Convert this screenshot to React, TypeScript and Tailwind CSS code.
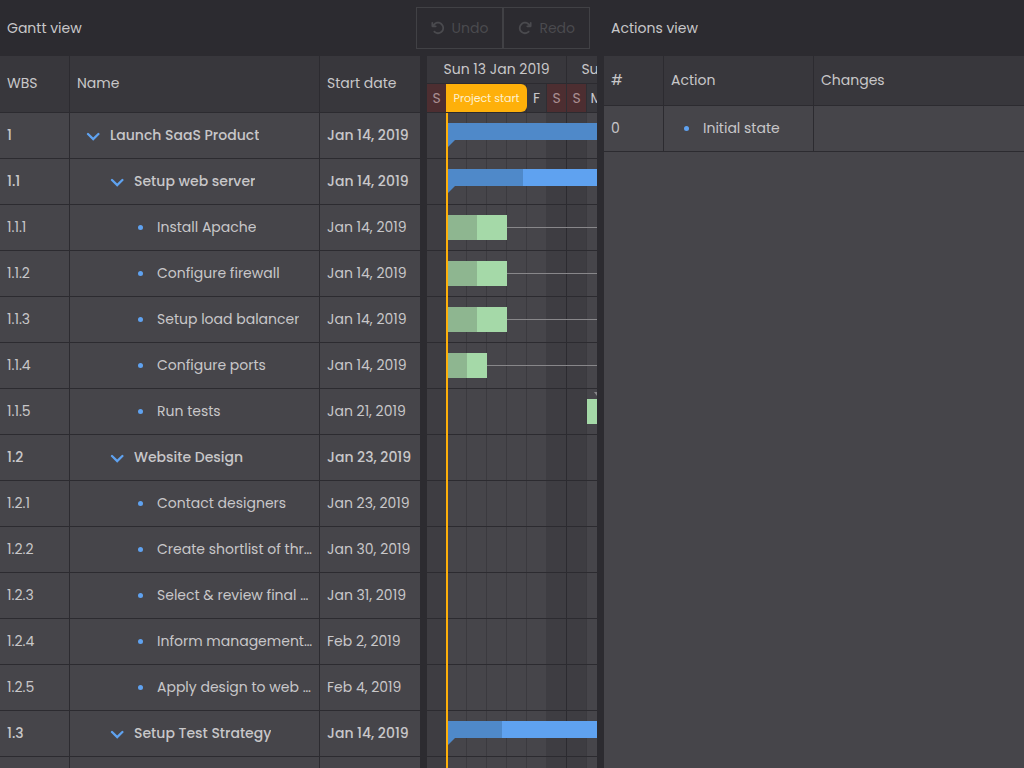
import type { ReactNode } from "react";
import { FaArrowRotateLeft, FaArrowRotateRight } from "react-icons/fa6";

type Bar = { kind: "parent" | "leaf"; start: number; done: number; width: number; link?: boolean };
type Task = { wbs: string; name: string; date: string; level: number; parent?: boolean; bar?: Bar };

const tasks: Task[] = [
  { wbs: "1", name: "Launch SaaS Product", date: "Jan 14, 2019", level: 0, parent: true, bar: { kind: "parent", start: 20, done: 200, width: 900 } },
  { wbs: "1.1", name: "Setup web server", date: "Jan 14, 2019", level: 1, parent: true, bar: { kind: "parent", start: 20, done: 76, width: 200 } },
  { wbs: "1.1.1", name: "Install Apache", date: "Jan 14, 2019", level: 2, bar: { kind: "leaf", start: 20, done: 30, width: 60, link: true } },
  { wbs: "1.1.2", name: "Configure firewall", date: "Jan 14, 2019", level: 2, bar: { kind: "leaf", start: 20, done: 30, width: 60, link: true } },
  { wbs: "1.1.3", name: "Setup load balancer", date: "Jan 14, 2019", level: 2, bar: { kind: "leaf", start: 20, done: 30, width: 60, link: true } },
  { wbs: "1.1.4", name: "Configure ports", date: "Jan 14, 2019", level: 2, bar: { kind: "leaf", start: 20, done: 20, width: 40, link: true } },
  { wbs: "1.1.5", name: "Run tests", date: "Jan 21, 2019", level: 2, bar: { kind: "leaf", start: 160, done: 0, width: 40 } },
  { wbs: "1.2", name: "Website Design", date: "Jan 23, 2019", level: 1, parent: true },
  { wbs: "1.2.1", name: "Contact designers", date: "Jan 23, 2019", level: 2 },
  { wbs: "1.2.2", name: "Create shortlist of thr…", date: "Jan 30, 2019", level: 2 },
  { wbs: "1.2.3", name: "Select & review final …", date: "Jan 31, 2019", level: 2 },
  { wbs: "1.2.4", name: "Inform management…", date: "Feb 2, 2019", level: 2 },
  { wbs: "1.2.5", name: "Apply design to web …", date: "Feb 4, 2019", level: 2 },
  { wbs: "1.3", name: "Setup Test Strategy", date: "Jan 14, 2019", level: 1, parent: true, bar: { kind: "parent", start: 20, done: 55, width: 200 } },
  { wbs: "", name: "", date: "", level: 2 },
];

// The project start marker covers Monday to Thursday of the first week.
const days = ["S", "", "", "", "", "F", "S", "S", "M"];
const weeks = ["Sun 13 Jan 2019", "Sun 20 Jan 2019"];
const indents = ["pl-4", "pl-10", "pl-16"];
const isWeekend = (i: number) => i % 7 === 0 || i % 7 === 6;

function ToolButton({ children }: { children: ReactNode }) {
  return (
    <button
      type="button"
      disabled
      className="flex h-[42px] items-center gap-[7px] border border-[#414145] px-[14px] pb-px text-[#4a4a4e]"
    >
      {children}
    </button>
  );
}

function Bullet() {
  return (
    <span className="flex w-[13px] shrink-0 justify-center">
      <span className="mt-0.5 size-[5px] rounded-full bg-[#5fa2f0]" />
    </span>
  );
}

function Chevron() {
  return (
    <svg width="14" height="14" viewBox="0 0 14 14" fill="none" stroke="currentColor" strokeWidth="2.3">
      <path d="M2 5L7.2 10.1L12.4 5" strokeLinecap="round" strokeLinejoin="miter" />
    </svg>
  );
}

function HeaderCell({ children, last }: { children: ReactNode; last?: boolean }) {
  return (
    <th
      className={
        "border-b border-[#2c2b30] bg-[#38373c] px-[7px] pb-0.5 text-left font-normal " + (last ? "" : "border-r")
      }
    >
      {children}
    </th>
  );
}

function TaskTable() {
  return (
    <table className="w-[420px] shrink-0 table-fixed border-separate border-spacing-0 self-start">
      <colgroup>
        <col className="w-[70px]" />
        <col className="w-[250px]" />
        <col className="w-[100px]" />
      </colgroup>
      <thead>
        <tr className="h-[57px]">
          <HeaderCell>WBS</HeaderCell>
          <HeaderCell>Name</HeaderCell>
          <HeaderCell last>Start date</HeaderCell>
        </tr>
      </thead>
      <tbody>
        {tasks.map((t, i) => (
          <tr key={i} className={"h-[46px] " + (t.parent ? "font-medium" : "")}>
            <td className="border-r border-b border-[#2c2b30] px-[7px] pb-0.5">{t.wbs}</td>
            <td className="border-r border-b border-[#2c2b30] pr-1 pb-0.5">
              {t.name && (
                <div className={"flex items-center gap-[10px] " + indents[t.level]}>
                  {t.parent ? (
                    <button type="button" aria-label={"Collapse " + t.name} className="mt-0.5 shrink-0 text-[#5fa2f0]">
                      <Chevron />
                    </button>
                  ) : (
                    <Bullet />
                  )}
                  <span className="truncate">{t.name}</span>
                </div>
              )}
            </td>
            <td className="border-b border-[#2c2b30] pb-0.5 pl-[7px] whitespace-nowrap">{t.date}</td>
          </tr>
        ))}
      </tbody>
    </table>
  );
}

function TaskBar({ bar }: { bar: Bar }) {
  if (bar.kind === "parent") {
    return (
      <div className="absolute top-[10px]" style={{ left: bar.start, width: bar.width }}>
        <div className="h-[17px] bg-[#5fa2f0]">
          <div className="h-full bg-[#4f89c9]" style={{ width: bar.done }} />
        </div>
        <svg width="8" height="8" viewBox="0 0 8 8" className="block">
          <path d="M0 0H8L0 8Z" fill="#4f89c9" />
        </svg>
      </div>
    );
  }
  return (
    <>
      <div className="absolute top-[10px] h-[25px] bg-[#a5d9a8]" style={{ left: bar.start, width: bar.width }}>
        <div className="h-full bg-[#8eb690]" style={{ width: bar.done }} />
      </div>
      {bar.link && (
        <div className="absolute top-[22px] right-0 h-px bg-[#88878a]" style={{ left: bar.start + bar.width }} />
      )}
      {bar.start === 160 && (
        <svg width="6" height="4" viewBox="0 0 6 4" className="absolute top-[3px] left-[167px]">
          <path d="M0 0H6L3 4Z" fill="#88878a" />
        </svg>
      )}
    </>
  );
}

function Timeline() {
  return (
    <div className="relative min-w-0 flex-1 overflow-hidden">
      <div className="w-[280px]">
        <div className="flex h-7 border-b border-[#2c2b30] bg-[#38373c]">
          {weeks.map((w) => (
            <div key={w} className="flex w-[140px] items-center justify-center border-r border-[#2c2b30] pb-0.5 whitespace-nowrap">
              {w}
            </div>
          ))}
        </div>
        <div className="flex h-[29px] border-b border-[#2c2b30] bg-[#38373c]">
          {days.map((d, i) => (
            <div
              key={i}
              className={
                "flex w-5 items-center justify-center border-r border-[#2f2e33] " +
                (isWeekend(i) ? "bg-[#4d2e31] text-[#a98f91]" : "")
              }
            >
              {d}
            </div>
          ))}
        </div>
        <div className="relative">
          <div className="absolute inset-0 flex">
            {days.map((_, i) => (
              <div
                key={i}
                className={
                  "w-5 border-r " +
                  (isWeekend(i) ? "bg-[#3e3d42] " : "") +
                  (i % 7 === 6 ? "border-[#2c2b30]" : i % 7 === 5 ? "border-[#3e3d42]" : "border-[#3b3a3f]")
                }
              />
            ))}
          </div>
          {tasks.map((t, i) => (
            <div key={i} className="relative h-[46px] border-b border-[#2c2b30]">
              {t.bar && <TaskBar bar={t.bar} />}
            </div>
          ))}
          <div className="absolute inset-y-0 left-[19px] w-0.5 bg-[#feb00a]" />
        </div>
      </div>
      <div className="absolute top-7 left-[19px] flex h-7 w-[81px] items-center justify-center rounded-r-md bg-[#feb00a] text-[11px] whitespace-nowrap text-[#fdf0d0]">
        Project start
      </div>
    </div>
  );
}

function ActionTable() {
  return (
    <table className="w-full table-fixed border-separate border-spacing-0">
      <colgroup>
        <col className="w-[60px]" />
        <col className="w-[150px]" />
        <col />
      </colgroup>
      <thead>
        <tr className="h-[50px]">
          <HeaderCell>#</HeaderCell>
          <HeaderCell>Action</HeaderCell>
          <HeaderCell last>Changes</HeaderCell>
        </tr>
      </thead>
      <tbody>
        <tr className="h-[46px]">
          <td className="border-r border-b border-[#2c2b30] px-[7px] pb-0.5">0</td>
          <td className="border-r border-b border-[#2c2b30] pb-0.5">
            <div className="flex items-center gap-[10px] pl-4">
              <Bullet />
              <span>Initial state</span>
            </div>
          </td>
          <td className="border-b border-[#2c2b30]" />
        </tr>
      </tbody>
    </table>
  );
}

export default function App() {
  return (
    <div className="grid h-screen grid-cols-[minmax(0,597fr)_7px_minmax(0,420fr)] overflow-hidden bg-[#2c2b30] font-['Poppins','Inter',sans-serif] text-[14px] leading-5 text-[#c8c7c9]">
      <section className="flex min-h-0 flex-col">
        <header className="flex h-14 shrink-0 items-center justify-between px-[7px]">
          <h2>Gantt view</h2>
          <div className="flex">
            <ToolButton>
              <FaArrowRotateLeft size={14} />
              Undo
            </ToolButton>
            <ToolButton>
              <FaArrowRotateRight size={14} />
              Redo
            </ToolButton>
          </div>
        </header>
        <div className="flex min-h-0 flex-1 overflow-hidden bg-[#46454a]">
          <TaskTable />
          <div className="w-[7px] shrink-0 bg-[#2c2b30]" />
          <Timeline />
        </div>
      </section>
      <div className="bg-[#2c2b30]" />
      <section className="flex min-h-0 flex-col">
        <header className="flex h-14 shrink-0 items-center px-[7px]">
          <h2>Actions view</h2>
        </header>
        <div className="min-h-0 flex-1 bg-[#46454a]">
          <ActionTable />
        </div>
      </section>
    </div>
  );
}
